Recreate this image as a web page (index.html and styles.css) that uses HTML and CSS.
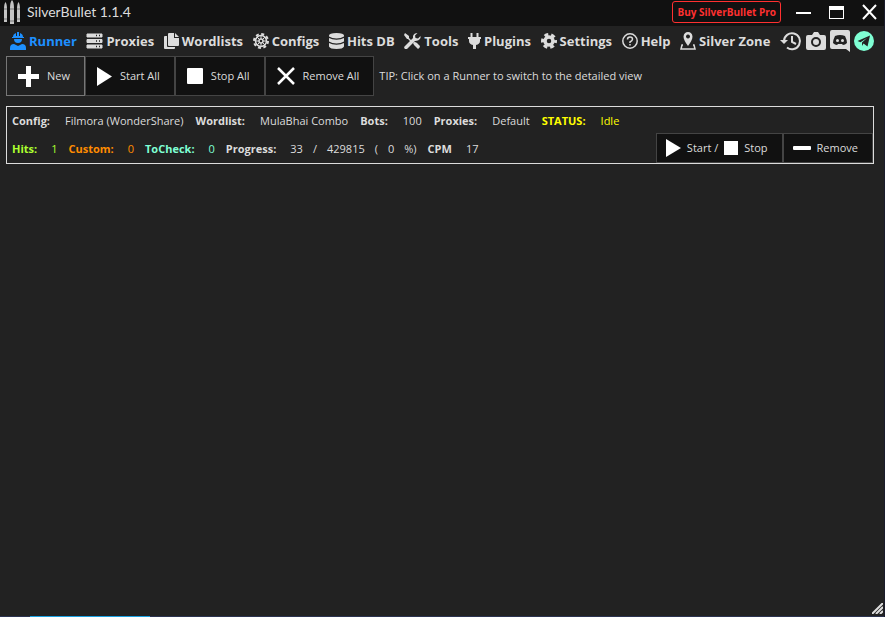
FILE: index.html
```html
<!DOCTYPE html>
<html lang="en">

    <head>

        <meta charset="UTF-8">
        <meta name="viewport" content="width=device-width, initial-scale=1.0">

        <title>SilverBullet 1.1.4</title>

        <link rel="stylesheet" href="styles.css">

    </head>

    <body>

        <header class="title-bar">
            <svg class="logo" viewBox="0 0 18 24">
                <path d="M1 9Q1 4 2.500 2Q4 4 4 9V22H1zM7 8Q7 2 9 0Q11 2 11 8V24H7zM14 9Q14 4 15.500 2Q17 4 17 9V22H14z" fill="#c4c4c4"/>
                <path d="M1 9h3M7 9h4M14 9h3M1 19h3M7 21h4M14 19h3" stroke="#777"/>
            </svg>
            <h1>SilverBullet 1.1.4</h1>
            <button class="buy">Buy SilverBullet Pro</button>
            <div class="window-buttons">
                <button aria-label="Minimize">
                    <svg width="15" height="16" viewBox="0 0 15 16"><path d="M0 9h15" stroke="#fff" stroke-width="2"/></svg>
                </button>
                <button aria-label="Maximize">
                    <svg width="15" height="16" viewBox="0 0 15 16"><path d="M0 2h15v13H0zM1 6v8h13V6z" fill="#fff" fill-rule="evenodd"/></svg>
                </button>
                <button aria-label="Close">
                    <svg width="15" height="16" viewBox="0 0 15 16"><path d="M1 1l13 14M14 1L1 15" stroke="#fff" stroke-width="2"/></svg>
                </button>
            </div>
        </header>

        <nav class="menu">
            <a href="#" class="active">
                <svg width="16" height="18" viewBox="0 0 16 18" fill="currentColor"><path d="M3 5Q3 2 6 1v3h1V0h2v4h1V1q3 1 3 4h1v1H2V5zM4 7h8q0 4-4 4T4 7zM0 18v-2q0-4 4-4l4 2 4-2q4 0 4 4v2z"/></svg>
                <span>Runner</span>
            </a>
            <a href="#">
                <svg width="17" height="16" viewBox="0 0 17 16"><path d="M1 1h15v3H1zM1 6.500h15v3H1zM1 12h15v3H1z" fill="currentColor" stroke="currentColor" stroke-linejoin="round"/><path d="M10 2.500h1M13 2.500h1M10 8h1M13 8h1M10 13.500h1M13 13.500h1" stroke="#222" stroke-width="1.500"/></svg>
                <span>Proxies</span>
            </a>
            <a href="#">
                <svg width="15" height="16" viewBox="0 0 15 16" fill="currentColor"><path d="M5 0h5v5h5v7q0 1-1 1H5q-1 0-1-1V1q0-1 1-1zM11 0l4 4h-4z"/><path d="M1 3h2v10q0 1 1 1h7v1q0 1-1 1H1q-1 0-1-1V4q0-1 1-1z"/></svg>
                <span>Wordlists</span>
            </a>
            <a href="#">
                <svg width="16" height="16" viewBox="0 0 16 16" fill="none" stroke="currentColor"><circle cx="8" cy="8" r="5.500" stroke-width="1.500"/><circle cx="8" cy="8" r="7" stroke-width="2" stroke-dasharray="3 2.500"/><circle cx="8" cy="8" r="2" stroke-width="1.500"/><path d="M8 2v4M8 10v4M2 8h4M10 8h4M4 4l2.500 2.500M9.500 9.500L12 12M12 4L9.500 6.500M6.500 9.500L4 12"/></svg>
                <span>Configs</span>
            </a>
            <a href="#">
                <svg width="15" height="16" viewBox="0 0 15 16" fill="currentColor"><path d="M0 2.500Q0 0 7.500 0T15 2.500v1Q12 5.500 7.500 5.500T0 3.500zM0 5q3 1.700 7.500 1.700T15 5v3.500q-3 2-7.500 2T0 8.500zM0 10q3 1.700 7.500 1.700T15 10v3.500Q14 16 7.500 16T0 13.500z"/></svg>
                <span>Hits DB</span>
            </a>
            <a href="#">
                <svg width="17" height="16" viewBox="0 0 17 16"><path d="M1 0l4 3v2l3 3-1 1-3-3H3L0 2zM9 10l1-1q2 0 3 1l3 3q0 2-2 3l-4-4z" fill="currentColor"/><path d="M2 14.500L10 6.500" stroke="currentColor" stroke-width="3.500" stroke-linecap="round"/><path d="M16.500 3L14 5.500 11.500 5 11 2.500 13.500 0Q10 0 9 3v3l2 2q4 0 5.500-3z" fill="currentColor"/></svg>
                <span>Tools</span>
            </a>
            <a href="#">
                <svg width="13" height="16" viewBox="0 0 13 16"><path d="M3.500 0v5M9.500 0v5" stroke="currentColor" stroke-width="2"/><path d="M0 4h13v2h-1v2q0 3-4 4v4H5v-4Q1 11 1 8V6H0z" fill="currentColor"/></svg>
                <span>Plugins</span>
            </a>
            <a href="#">
                <svg width="16" height="16" viewBox="0 0 16 16" fill="none" stroke="currentColor"><circle cx="8" cy="8" r="4" stroke-width="3.500"/><circle cx="8" cy="8" r="6.500" stroke-width="3" stroke-dasharray="3.800 3" stroke-dashoffset="1.900"/></svg>
                <span>Settings</span>
            </a>
            <a href="#">
                <svg width="16" height="16" viewBox="0 0 16 16" fill="none" stroke="currentColor" stroke-width="1.500"><circle cx="8" cy="8" r="7.200"/><path d="M5.500 6.500Q5.500 4 8 4t2.500 2.200Q10.500 7.500 8 9v1M8 11v1.500"/></svg>
                <span>Help</span>
            </a>
            <a href="#">
                <svg width="16" height="18" viewBox="0 0 16 18"><path d="M8 14Q3.500 8 3.500 4.500 4 0 8 0t4.500 4.500Q12.500 8 8 14zM8 2.500a2 2 0 1 0 .01 0z" fill="currentColor" fill-rule="evenodd"/><path d="M3 13H2l-1 4h14l-1-4h-1" fill="none" stroke="currentColor" stroke-width="1.500"/></svg>
                <span>Silver Zone</span>
            </a>
            <div class="menu-icons">
                <button aria-label="History">
                    <svg width="22" height="20" viewBox="0 0 22 20" fill="none" stroke="currentColor" stroke-width="2"><path d="M4 10a8 8 0 1 1 3 6.500M12 5v6l4 2"/><path d="M0 9h8l-4 4z" fill="currentColor" stroke="none"/></svg>
                </button>
                <button aria-label="Screenshot">
                    <svg width="20" height="18" viewBox="0 0 20 18"><path d="M2 3h4l2-3h4l2 3h4q2 0 2 2v11q0 2-2 2H2q-2 0-2-2V5q0-2 2-2z" fill="currentColor"/><circle cx="10" cy="10" r="4" fill="none" stroke="#222" stroke-width="2"/></svg>
                </button>
                <button aria-label="Discord">
                    <svg width="20" height="22" viewBox="0 0 20 22"><path d="M2 0h16q2 0 2 2v20l-4-3H2q-2 0-2-2V2q0-2 2-2z" fill="currentColor"/><path d="M5 6q5-2 10 0 2 4 2 7-2 2-4 2l-1-1H8l-1 1q-2 0-4-2 0-3 2-7z" fill="#222"/><circle cx="7.500" cy="10.500" r="1.500" fill="currentColor"/><circle cx="12.500" cy="10.500" r="1.500" fill="currentColor"/></svg>
                </button>
                <button aria-label="Telegram">
                    <svg width="20" height="20" viewBox="0 0 20 20"><circle cx="10" cy="10" r="10" fill="#7fffd4"/><path d="M3.500 10L16 4.500 13.500 15.500 9.500 12.500 8 15V11.500L13 7 6.500 11.200z" fill="#222"/></svg>
                </button>
            </div>
        </nav>

        <main>

            <div class="toolbar">
                <button class="selected">
                    <svg width="21" height="21" viewBox="0 0 21 21"><path d="M10.500 0v21M0 10.500h21" stroke="#fff" stroke-width="5"/></svg>
                    <span>New</span>
                </button>
                <button>
                    <svg width="15" height="19" viewBox="0 0 15 19"><path d="M0 0l15 9.500L0 19z" fill="#fff"/></svg>
                    <span>Start All</span>
                </button>
                <button>
                    <svg width="16" height="16" viewBox="0 0 16 16"><rect width="16" height="16" rx="1" fill="#fff"/></svg>
                    <span>Stop All</span>
                </button>
                <button>
                    <svg width="18" height="18" viewBox="0 0 18 18"><path d="M1 1l16 16M17 1L1 17" stroke="#fff" stroke-width="2.500"/></svg>
                    <span>Remove All</span>
                </button>
                <p>TIP: Click on a Runner to switch to the detailed view</p>
            </div>

            <section class="runner">
                <dl>
                    <div><dt>Config:</dt><dd>Filmora (WonderShare)</dd></div>
                    <div><dt>Wordlist:</dt><dd>MulaBhai Combo</dd></div>
                    <div><dt>Bots:</dt><dd>100</dd></div>
                    <div><dt>Proxies:</dt><dd>Default</dd></div>
                    <div class="status"><dt>STATUS:</dt><dd>Idle</dd></div>
                </dl>
                <div class="runner-bottom">
                    <dl>
                        <div class="hits"><dt>Hits:</dt><dd>1</dd></div>
                        <div class="custom"><dt>Custom:</dt><dd>0</dd></div>
                        <div class="tocheck"><dt>ToCheck:</dt><dd>0</dd></div>
                        <div>
                            <dt>Progress:</dt>
                            <dd class="progress"><span>33</span><span>/</span><span>429815</span><span>(</span><span>0</span><span>%)</span></dd>
                        </div>
                        <div><dt>CPM</dt><dd>17</dd></div>
                    </dl>
                    <div class="runner-buttons">
                        <button>
                            <svg width="15" height="18" viewBox="0 0 15 18"><path d="M0 0l15 9L0 18z" fill="#fff"/></svg>
                            <span>Start /</span>
                            <svg width="14" height="14" viewBox="0 0 14 14"><path d="M0 0h14v14H0z" fill="#fff"/></svg>
                            <span>Stop</span>
                        </button>
                        <button>
                            <svg width="18" height="4" viewBox="0 0 18 4"><rect width="18" height="4" rx="1" fill="#fff"/></svg>
                            <span>Remove</span>
                        </button>
                    </div>
                </div>
            </section>

        </main>

        <footer>
            <svg class="grip" width="11" height="11" viewBox="0 0 11 11"><path d="M0 11L11 0M4 11l7-7M8 11l3-3" stroke="#ddd" stroke-width="2"/></svg>
            <div class="edge"></div>
        </footer>

    </body>

</html>
```

FILE: styles.css
```css
* {
    box-sizing: border-box;
}

body {
    display: flex;
    flex-direction: column;
    min-height: 100vh;
    margin: 0;
    background-color: #222;
    color: #dcdcdc;
    font-family: "Open Sans", "Noto Sans", sans-serif;
    font-size: 11px;
    line-height: 16px;
    border-right: 1px solid #1b1c2b;
}

h1, p, dl, dd {
    margin: 0;
}

button {
    padding: 0;
    border: 0;
    background: none;
    color: inherit;
    font: inherit;
    cursor: pointer;
}

svg {
    display: block;
    flex: none;
}

.title-bar {
    display: flex;
    align-items: center;
    height: 26px;
    padding: 0 7px 3px 3px;
    background-color: #111;
}

.logo {
    width: 18px;
    height: 24px;
    margin-right: 6px;
}

h1 {
    flex: 1;
    font-family: Lato, sans-serif;
    font-size: 14px;
    font-weight: normal;
}

.buy {
    height: 22px;
    margin-right: 15px;
    padding: 0 4px;
    border: 1px solid #ff3030;
    border-radius: 3px;
    color: #ff3030;
    font-size: 10px;
    font-weight: bold;
}

.window-buttons {
    display: flex;
    gap: 18px;
}

.menu {
    display: flex;
    align-items: center;
    justify-content: space-between;
    height: 30px;
    padding: 0 10px;
}

.menu a {
    display: flex;
    align-items: center;
    gap: 3px;
    color: inherit;
    font-size: 13px;
    font-weight: bold;
    text-decoration: none;
    white-space: nowrap;
}

.menu .active {
    color: #1e90ff;
}

.menu-icons {
    display: flex;
    align-items: center;
    gap: 4px;
}

main {
    flex: 1;
    padding: 0 10px 0 6px;
}

.toolbar {
    display: flex;
    align-items: center;
    height: 40px;
    margin-bottom: 10px;
}

.toolbar button,
.runner-buttons button {
    display: flex;
    align-items: center;
    gap: 8px;
    height: 100%;
    padding: 0 14px 0 11px;
    border: 1px solid #444;
    background-color: #111;
    white-space: nowrap;
}

.toolbar .selected {
    border-color: #777;
    background-color: #222;
}

.toolbar p {
    margin-left: 5px;
}

.runner {
    border: 1px solid #dcdcdc;
}

dl {
    display: flex;
    align-items: center;
    gap: 12px;
    height: 26px;
    padding: 2px 0 0 5px;
    white-space: nowrap;
}

dl div {
    display: flex;
    gap: 15px;
}

dt {
    font-weight: bold;
}

.runner-bottom dl {
    gap: 11px;
}

.runner-bottom dl div {
    gap: 14px;
}

.progress {
    display: flex;
    gap: 10px;
}

.status {
    color: #ff0;
}

.hits {
    color: #adff2f;
}

.custom {
    color: #ff8c00;
}

.tocheck {
    color: #7fffd4;
}

.runner-bottom {
    display: flex;
    align-items: center;
    justify-content: space-between;
    height: 30px;
}

.runner-buttons {
    display: flex;
    height: 100%;
}

.runner-buttons button {
    padding: 0 14px 0 9px;
    gap: 6px;
}

.grip {
    margin-left: auto;
    margin-right: 1px;
}

.edge {
    display: flex;
    align-items: flex-end;
    height: 3px;
    background: linear-gradient(#2b3350, #2b3350) bottom / 100% 1px no-repeat;
}

.edge::before {
    content: "";
    width: 120px;
    height: 1px;
    margin-left: 30px;
    background-color: #1ba1e2;
}
```
